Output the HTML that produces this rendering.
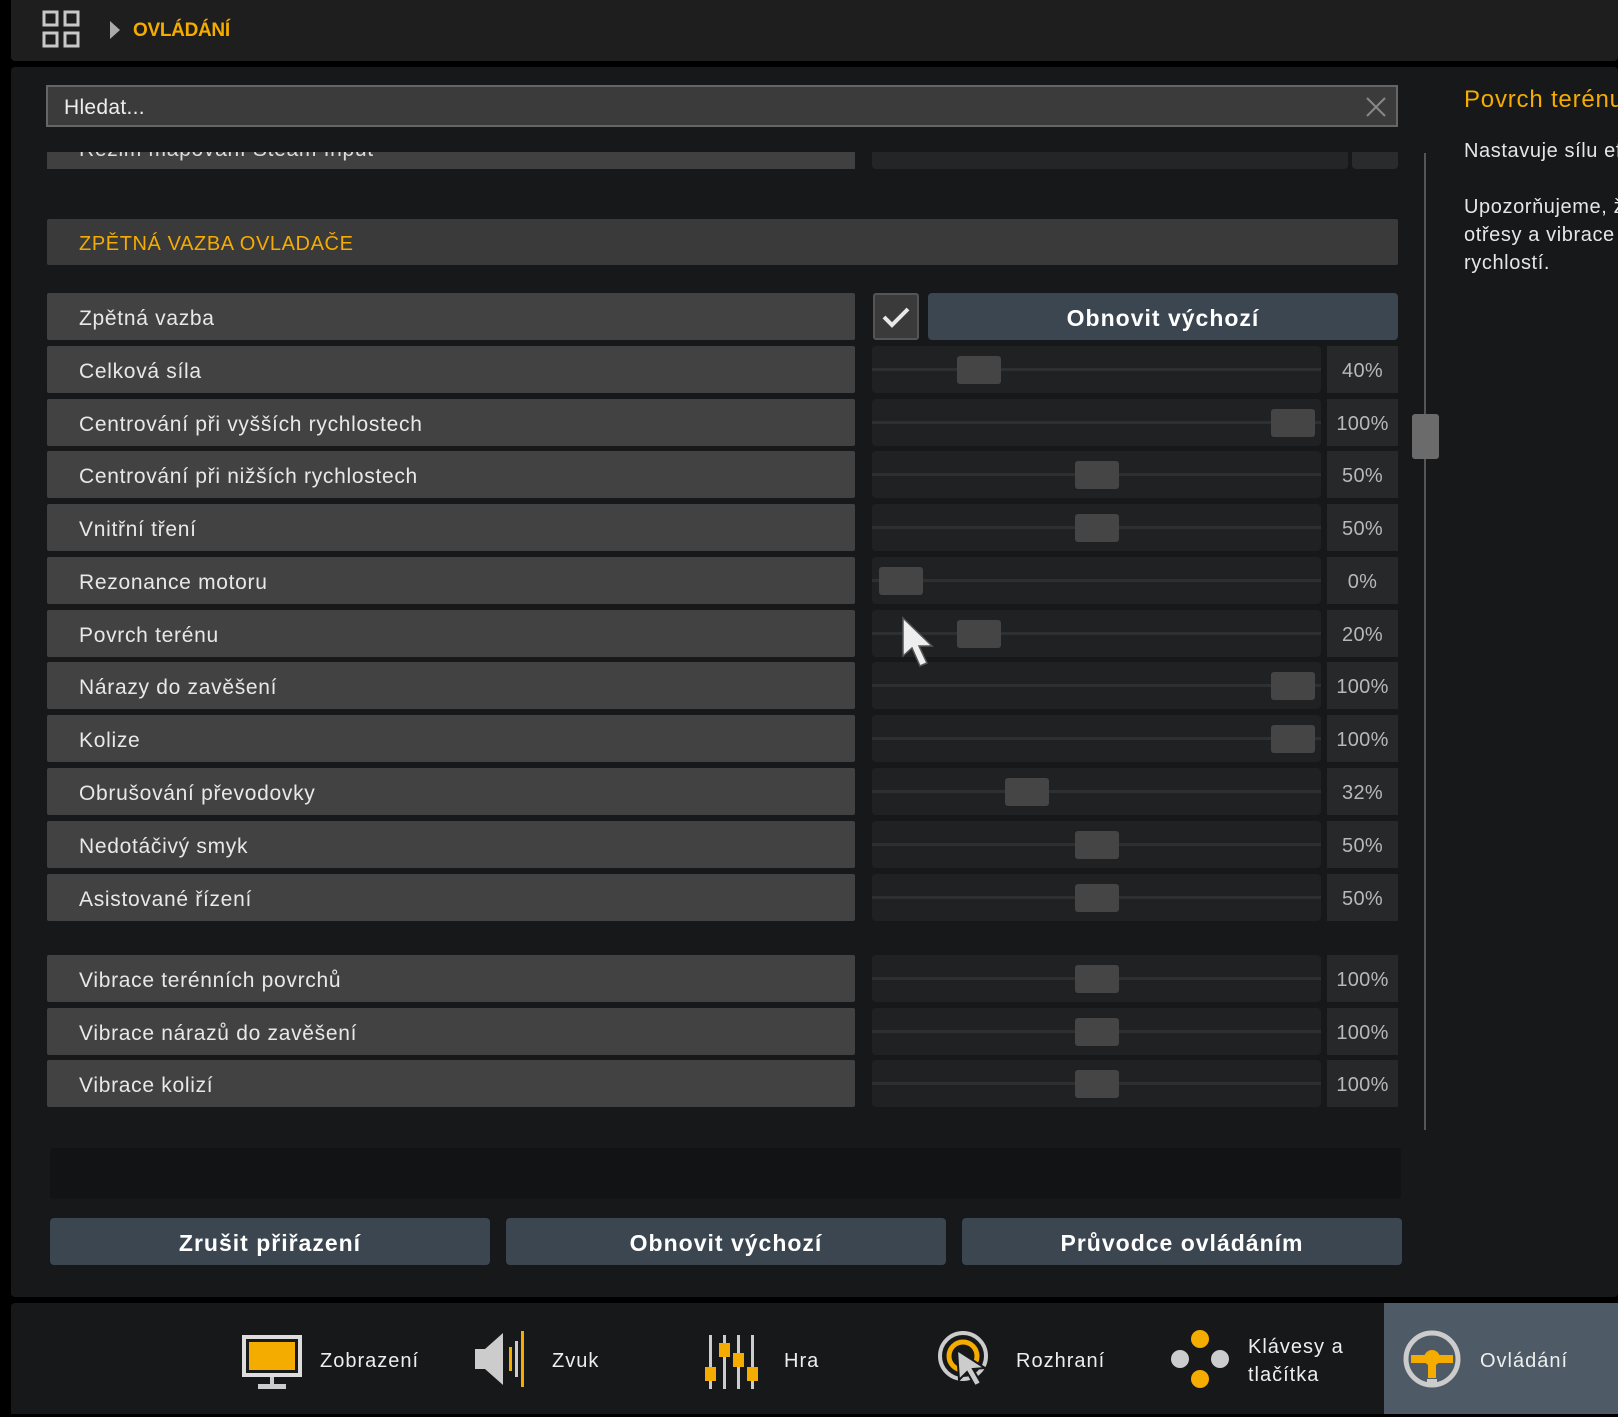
<!DOCTYPE html>
<html><head><meta charset="utf-8">
<style>
*{margin:0;padding:0;box-sizing:border-box}
body{width:1618px;height:1417px;background:#000;position:relative;overflow:hidden;font-family:"Liberation Sans",sans-serif;color:#e6e6e6}
.a{position:absolute}
.lab{position:absolute;left:47px;width:808px;height:47px;background:#424242;border-radius:2px;font-size:21px;line-height:51px;padding-left:32px;color:#e8e8e8;letter-spacing:0.7px}
.sl{position:absolute;left:872px;width:449px;height:47px;background:#202123;border-radius:4px}
.sl .t{position:absolute;left:0;right:0;top:22px;height:3px;background:#2e2f31}
.sl .th{position:absolute;top:10px;width:44px;height:28px;background:#454545;border-radius:3px}
.val{position:absolute;left:1327px;width:71px;height:47px;background:#272829;color:#b8b8b8;font-size:20px;line-height:51px;text-align:center;letter-spacing:0.3px}
.btn{position:absolute;background:#3b4650;border-radius:4px;color:#fff;font-weight:bold;font-size:23px;text-align:center;letter-spacing:1px}
.nav{position:absolute;top:1361px;font-size:20px;color:#eee;transform:translateY(-50%);line-height:28px;letter-spacing:1px}
</style></head><body>
<div class="a" style="left:11px;top:0;width:1607px;height:61px;background:#1e1e1f;border-radius:0 0 4px 4px"></div>
<svg class="a" style="left:42px;top:10px" width="38" height="38" viewBox="0 0 38 38" fill="none" stroke="#c8c8c8" stroke-width="3"><rect x="2" y="2" width="13" height="13"/><rect x="23" y="2" width="13" height="13"/><rect x="2" y="23" width="13" height="13"/><rect x="23" y="23" width="13" height="13"/></svg>
<svg class="a" style="left:110px;top:21px" width="10" height="18"><polygon points="0,0 10,9 0,18" fill="#aaa"/></svg>
<div class="a" style="left:133px;top:20px;font-size:19px;font-weight:bold;color:#f5ac00;letter-spacing:-0.3px">OVLÁDÁNÍ</div>
<div class="a" style="left:11px;top:67px;width:1607px;height:1230px;background:#17181a;border-radius:4px"></div>
<div class="a" style="left:46px;top:85px;width:1352px;height:42px;background:#3b3b3b;border:2px solid #666"></div>
<div class="a" style="left:64px;top:96px;font-size:21px;color:#eee;letter-spacing:0.3px">Hledat...</div>
<svg class="a" style="left:1366px;top:97px" width="20" height="20" stroke="#888" stroke-width="2"><line x1="1" y1="1" x2="19" y2="19"/><line x1="19" y1="1" x2="1" y2="19"/></svg>
<div class="a" style="left:47px;top:152px;width:808px;height:17px;background:#404040;overflow:hidden"><div style="margin:-14px 0 0 32px;font-size:21px;color:#ddd;letter-spacing:0.7px">Režim mapování Steam Input</div></div>
<div class="a" style="left:872px;top:152px;width:476px;height:17px;background:#242527;border-radius:0 0 4px 4px"></div>
<div class="a" style="left:1352px;top:152px;width:46px;height:17px;background:#2a2b2d;border-radius:0 0 4px 4px"></div>
<div class="a" style="left:47px;top:219px;width:1351px;height:46px;background:#3a3a3a;border-radius:2px;font-size:20px;line-height:50px;padding-left:32px;color:#f5ac00;letter-spacing:0.6px">ZPĚTNÁ VAZBA OVLADAČE</div>
<div class="lab" style="top:293px">Zpětná vazba</div>
<div class="a" style="left:873px;top:293px;width:46px;height:47px;background:#3a3a3a;border:2px solid #555;border-radius:3px"></div>
<svg class="a" style="left:881px;top:305px" width="30" height="24" fill="none" stroke="#e8e8e8" stroke-width="4"><polyline points="3,12 11,20 27,4"/></svg>
<div class="btn" style="left:928px;top:293px;width:470px;height:47px;line-height:51px">Obnovit výchozí</div>

<div class="lab" style="top:346px">Celková síla</div><div class="sl" style="top:346px"><div class="t"></div><div class="th" style="left:85px"></div></div><div class="val" style="top:346px">40%</div>
<div class="lab" style="top:399px">Centrování při vyšších rychlostech</div><div class="sl" style="top:399px"><div class="t"></div><div class="th" style="left:399px"></div></div><div class="val" style="top:399px">100%</div>
<div class="lab" style="top:451px">Centrování při nižších rychlostech</div><div class="sl" style="top:451px"><div class="t"></div><div class="th" style="left:203px"></div></div><div class="val" style="top:451px">50%</div>
<div class="lab" style="top:504px">Vnitřní tření</div><div class="sl" style="top:504px"><div class="t"></div><div class="th" style="left:203px"></div></div><div class="val" style="top:504px">50%</div>
<div class="lab" style="top:557px">Rezonance motoru</div><div class="sl" style="top:557px"><div class="t"></div><div class="th" style="left:7px"></div></div><div class="val" style="top:557px">0%</div>
<div class="lab" style="top:610px">Povrch terénu</div><div class="sl" style="top:610px"><div class="t"></div><div class="th" style="left:85px"></div></div><div class="val" style="top:610px">20%</div>
<div class="lab" style="top:662px">Nárazy do zavěšení</div><div class="sl" style="top:662px"><div class="t"></div><div class="th" style="left:399px"></div></div><div class="val" style="top:662px">100%</div>
<div class="lab" style="top:715px">Kolize</div><div class="sl" style="top:715px"><div class="t"></div><div class="th" style="left:399px"></div></div><div class="val" style="top:715px">100%</div>
<div class="lab" style="top:768px">Obrušování převodovky</div><div class="sl" style="top:768px"><div class="t"></div><div class="th" style="left:133px"></div></div><div class="val" style="top:768px">32%</div>
<div class="lab" style="top:821px">Nedotáčivý smyk</div><div class="sl" style="top:821px"><div class="t"></div><div class="th" style="left:203px"></div></div><div class="val" style="top:821px">50%</div>
<div class="lab" style="top:874px">Asistované řízení</div><div class="sl" style="top:874px"><div class="t"></div><div class="th" style="left:203px"></div></div><div class="val" style="top:874px">50%</div>

<div class="lab" style="top:955px">Vibrace terénních povrchů</div><div class="sl" style="top:955px"><div class="t"></div><div class="th" style="left:203px"></div></div><div class="val" style="top:955px">100%</div>
<div class="lab" style="top:1008px">Vibrace nárazů do zavěšení</div><div class="sl" style="top:1008px"><div class="t"></div><div class="th" style="left:203px"></div></div><div class="val" style="top:1008px">100%</div>
<div class="lab" style="top:1060px">Vibrace kolizí</div><div class="sl" style="top:1060px"><div class="t"></div><div class="th" style="left:203px"></div></div><div class="val" style="top:1060px">100%</div>

<svg class="a" style="left:900px;top:616px" width="40" height="56"><polygon points="3,2 3,40 12,32 20,50 27,47 19,30 32,30" fill="#eee" stroke="#555" stroke-width="1.5"/></svg>
<div class="a" style="left:1424px;top:153px;width:2px;height:977px;background:#555"></div>
<div class="a" style="left:1412px;top:414px;width:27px;height:45px;background:#6b6b6b;border-radius:3px"></div>
<div class="a" style="left:1464px;top:86px;font-size:24px;color:#f5ac00;white-space:nowrap;letter-spacing:0.8px">Povrch terénu</div>
<div class="a" style="left:1464px;top:140px;font-size:20px;color:#e6e6e6;white-space:nowrap;letter-spacing:0.6px">Nastavuje sílu efektu</div>
<div class="a" style="left:1464px;top:193px;font-size:20px;line-height:28px;color:#e6e6e6;white-space:nowrap;letter-spacing:0.6px">Upozorňujeme, že<br>otřesy a vibrace<br>rychlostí.</div>
<div class="a" style="left:50px;top:1148px;width:1351px;height:51px;background:#121314;border-radius:3px"></div>
<div class="btn" style="left:50px;top:1218px;width:440px;height:47px;line-height:51px">Zrušit přiřazení</div>
<div class="btn" style="left:506px;top:1218px;width:440px;height:47px;line-height:51px">Obnovit výchozí</div>
<div class="btn" style="left:962px;top:1218px;width:440px;height:47px;line-height:51px">Průvodce ovládáním</div>
<div class="a" style="left:11px;top:1303px;width:1607px;height:111px;background:#17181a;border-radius:4px 4px 0 0"></div>
<div class="a" style="left:1384px;top:1303px;width:234px;height:111px;background:#4e5a65"></div>
<svg class="a" style="left:240px;top:1333px" width="64" height="58"><rect x="2" y="2" width="60" height="42" fill="#ddd"/><rect x="6" y="6" width="52" height="34" fill="#1a1a1a"/><rect x="9" y="9" width="46" height="28" fill="#f5ac00"/><rect x="30" y="44" width="4" height="8" fill="#ccc"/><rect x="18" y="51" width="28" height="5" fill="#ccc"/></svg>
<div class="nav" style="left:320px">Zobrazení</div>
<svg class="a" style="left:473px;top:1329px" width="64" height="60"><rect x="2" y="20" width="10" height="20" fill="#ccc"/><polygon points="12,20 30,4 30,56 12,40" fill="#ccc"/><rect x="36" y="18" width="3" height="24" fill="#f5ac00"/><rect x="42" y="12" width="3" height="36" fill="#ccc"/><rect x="48" y="2" width="3" height="56" fill="#f5ac00"/></svg>
<div class="nav" style="left:552px">Zvuk</div>
<svg class="a" style="left:705px;top:1333px" width="64" height="58" fill="#ccc"><rect x="4" y="2" width="3" height="54"/><rect x="18" y="2" width="3" height="54"/><rect x="32" y="2" width="3" height="54"/><rect x="46" y="2" width="3" height="54"/><rect x="0" y="34" width="11" height="14" fill="#f5ac00"/><rect x="14" y="10" width="11" height="14" fill="#f5ac00"/><rect x="28" y="20" width="11" height="14" fill="#f5ac00"/><rect x="42" y="34" width="11" height="14" fill="#f5ac00"/></svg>
<div class="nav" style="left:784px">Hra</div>
<svg class="a" style="left:937px;top:1328px" width="64" height="62" fill="none"><circle cx="26" cy="28" r="23" stroke="#ccc" stroke-width="4"/><circle cx="26" cy="28" r="14" stroke="#f5ac00" stroke-width="5"/><polygon points="20,22 22,52 30,44 38,58 44,55 36,41 48,40" fill="#ccc" stroke="#17181a" stroke-width="2"/></svg>
<div class="nav" style="left:1016px">Rozhraní</div>
<svg class="a" style="left:1170px;top:1329px" width="62" height="60"><circle cx="30" cy="10" r="9" fill="#f5ac00"/><circle cx="30" cy="50" r="9" fill="#f5ac00"/><circle cx="10" cy="30" r="9" fill="#ccc"/><circle cx="50" cy="30" r="9" fill="#ccc"/></svg>
<div class="nav" style="left:1248px">Klávesy a<br>tlačítka</div>
<svg class="a" style="left:1401px;top:1328px" width="62" height="62"><circle cx="31" cy="31" r="26" fill="none" stroke="#ccc" stroke-width="5"/><rect x="10" y="27" width="42" height="8" fill="#f5ac00"/><circle cx="31" cy="30" r="8" fill="#f5ac00"/><rect x="27" y="30" width="8" height="20" fill="#f5ac00"/><rect x="26" y="51" width="10" height="6" fill="#ccc"/></svg>
<div class="nav" style="left:1480px">Ovládání</div>
</body></html>
